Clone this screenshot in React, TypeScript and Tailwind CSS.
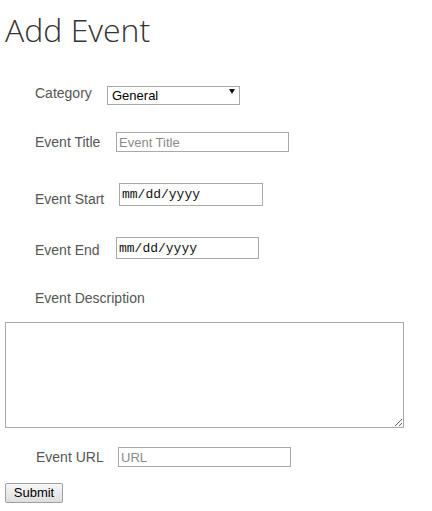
import React from "react";

export default function App() {
  const label = "text-[14px] leading-[16px] text-[#555] font-['Liberation_Sans',Arial,sans-serif] shrink-0";
  const input =
    "border border-[#a9a9a9] bg-white px-[2px] text-[13px] text-black font-['Liberation_Sans',Arial,sans-serif] outline-none placeholder:text-[#8a8a8a]";
  return (
    <div className="min-h-[511px] w-[432px] bg-white pl-[5px] font-['Liberation_Sans',Arial,sans-serif]">
      <div className="flex flex-col">
        <h1 className="mt-[6px] h-[48px] text-[32px] leading-[48px] font-light text-[#333] font-['Open_Sans',sans-serif]">
          Add Event
        </h1>

        <div className="mt-[29px] flex h-[19px] items-center pl-[30px]">
          <div className={label + " w-[72px]"}>Category</div>
          <div className="relative h-[19px] w-[133px]">
            <select
              className="h-[19px] w-[133px] appearance-none rounded-none border border-[#a9a9a9] bg-white pl-[4px] text-[13px] leading-[17px] text-black outline-none font-['Liberation_Sans',Arial,sans-serif]"
              defaultValue="General"
            >
              <option>General</option>
            </select>
            <svg
              className="pointer-events-none absolute right-[5px] top-[6px]"
              width="6"
              height="5"
              viewBox="0 0 6 5"
            >
              <polygon points="0,0 6,0 3,5" fill="#111" />
            </svg>
          </div>
        </div>

        <div className="mt-[30px] flex h-[20px] items-center pl-[30px]">
          <div className={label + " w-[81px]"}>Event Title</div>
          <input className={input + " h-[20px] w-[173px]"} placeholder="Event Title" />
        </div>

        <div className="mt-[31px] flex h-[23px] items-center pl-[30px]">
          <div className={label + " w-[84px] pt-[9px]"}>Event Start</div>
          <input
            readOnly
            className="h-[23px] w-[144px] border border-[#a9a9a9] bg-white px-[2px] text-[13px] text-[#111] outline-none font-['Liberation_Mono',monospace]"
            defaultValue="mm/dd/yyyy"
          />
        </div>

        <div className="mt-[31px] flex h-[22px] items-center pl-[30px]">
          <div className={label + " w-[81px] pt-[4px]"}>Event End</div>
          <input
            readOnly
            className="h-[22px] w-[143px] border border-[#a9a9a9] bg-white px-[2px] text-[13px] text-[#111] outline-none font-['Liberation_Mono',monospace]"
            defaultValue="mm/dd/yyyy"
          />
        </div>

        <div className={"mt-[31px] pl-[30px] " + label}>Event Description</div>

        <textarea className="mt-[16px] h-[106px] w-[399px] border border-[#a9a9a9] bg-white p-[2px] text-[13px] outline-none" />

        <div className="mt-[19px] flex h-[20px] items-center pl-[31px]">
          <div className={label + " w-[82px]"}>Event URL</div>
          <input className={input + " h-[20px] w-[173px]"} placeholder="URL" />
        </div>

        <div className="mt-[16px] flex">
          <button className="flex h-[20px] w-[58px] items-center justify-center rounded-[2px] border border-[#a0a0a0] bg-gradient-to-b from-[#f7f7f7] to-[#dedede] text-[13px] leading-[18px] text-black font-['Liberation_Sans',Arial,sans-serif]">
            Submit
          </button>
        </div>
      </div>
    </div>
  );
}
